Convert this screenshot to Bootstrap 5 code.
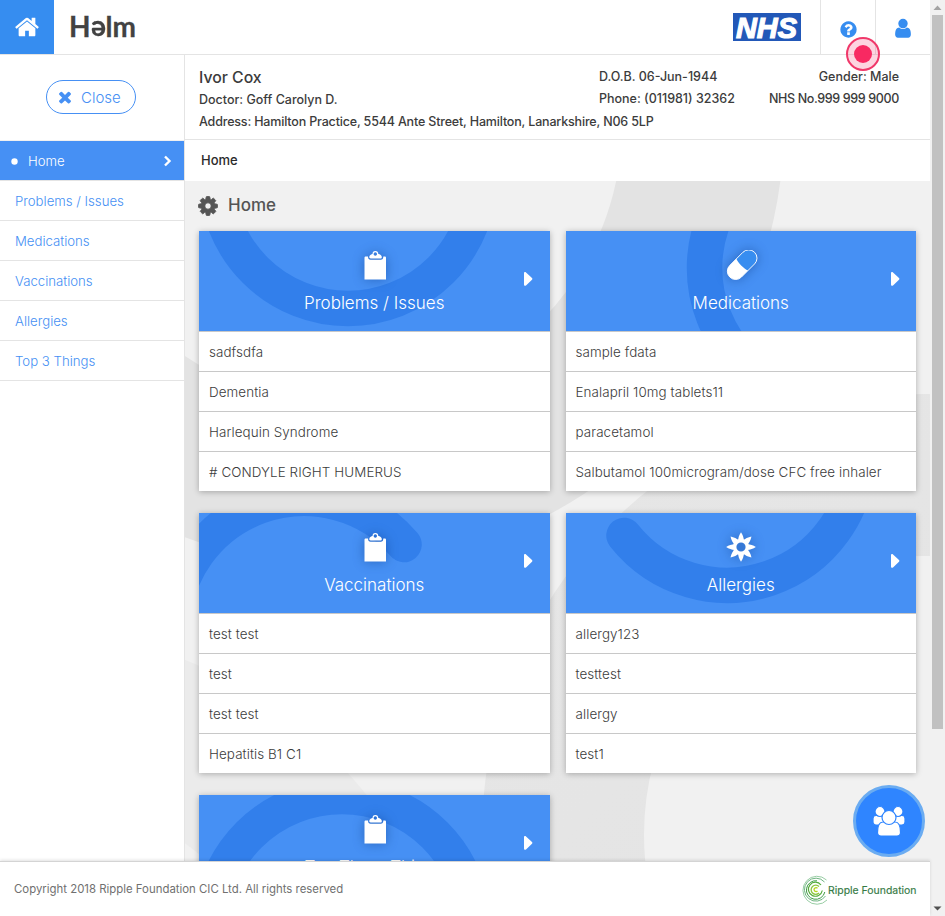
<!DOCTYPE html>
<html lang="en">
<head>
<meta charset="utf-8">
<meta name="viewport" content="width=device-width, initial-scale=1">
<title>Helm</title>
<link href="https://cdn.jsdelivr.net/npm/bootstrap@5.3.0/dist/css/bootstrap.min.css" rel="stylesheet">
<style>
:root{--blue:#4690f4;--blue-dark:#327feb;--line:#e4e4e4}
body{font-family:Inter,"Liberation Sans",sans-serif;font-size:14px;color:#3c3c3c;width:945px;height:916px;overflow:hidden;background:#fff}
svg{display:block}
.topbar{height:55px;border-bottom:1px solid var(--line)}
.home-btn{width:54px;height:54px;background:#368df0}
.brand{font-family:Lato,Inter,sans-serif;font-weight:700;font-size:28px;line-height:54px;color:#424242;padding:0 0 3px 15px;-webkit-text-stroke:.3px #424242}
.brand .turned{display:inline-block;transform:rotate(180deg);transform-origin:50% 55.5%}
.nhs{margin-right:19px}
.top-cell{width:55px;height:54px;border-left:1px solid var(--line)}
.side{width:185px;border-right:1px solid var(--line)}
.close-box{height:86px;padding:25px 0 0 46px;border-bottom:1px solid #f0f0f0}
.btn-close-pill{width:90px;height:34px;border:1px solid var(--blue);border-radius:17px;color:var(--blue);font-size:15px;font-weight:300;padding:0 0 0 11px}
.btn-close-pill span{margin-left:9px;padding-top:2px}
.side-link{height:40px;border-bottom:1px solid var(--line);padding:2px 0 0 15px;color:var(--blue);font-weight:300;font-size:13.2px}
.side-link.current{background:var(--blue);color:#fff;padding:2px 12px 0 11px}
.side-link.current span{margin-left:10px}
.side-link.current .chev{margin-top:-2px}
.patient{height:85px;border-bottom:1px solid var(--line);padding:11px 31px 0 14px;font-size:12.5px;font-weight:500}
.patient-name{font-size:15.8px;line-height:23px}
.pl{line-height:22px}
.t-addr{letter-spacing:-.17px}
.t-nhs{letter-spacing:-.36px}
.crumb{height:41px;padding-left:16px;font-size:13px;font-weight:500;color:#2a2a2a}
.main-area{background:#f1f1f1;height:680px;overflow:hidden;position:relative}
.rings{position:absolute;left:0;top:0}
.page-title{height:50px;padding:0 0 0 12px;font-size:17px;font-weight:500;color:#555}
.page-title span{margin-left:9px}
.tiles{display:grid;grid-template-columns:1fr 1fr;gap:22px 16px;padding:0 14px}
.tile{background:#fff;box-shadow:0 1px 6px rgba(0,0,0,.28)}
.tile-head{height:100px;background:var(--blue);color:#fff;position:relative;overflow:hidden}
.tile-head .arc{position:absolute;left:0;top:0}
.tile-head .glyph{height:50px;padding-top:19px;position:relative;filter:drop-shadow(0 0 6px rgba(0,40,110,.4))}
.glyph.clip{padding-left:3px}
.glyph.pill{padding-left:2px}
.tile-name{position:relative;font-size:17px;font-weight:300;line-height:24px;padding-top:10px}
.tile-go{position:absolute;right:16.5px;top:40px}
.tile-row{height:40px;border-top:1px solid #c8c8c8;padding:2px 0 0 10px;font-size:13.4px;font-weight:350;letter-spacing:.09px}
.foot{height:55px;border-top:1px solid #d4d4d4;box-shadow:0 -1px 3px rgba(0,0,0,.12);padding:1px 13px 0 14px;font-size:11.4px;color:#707070;position:relative;background:#fff}
.scroll{width:15px;background:#f1f1f1}
.scroll-thumb{width:11px;height:714px;background:#c1c1c1}
.fab{position:absolute;left:853px;top:785px;width:72px;height:72px;border-radius:50%;border:3px solid #6bacf1;background:#2f85ff}
.pointer{position:absolute;left:846px;top:37px;width:34px;height:34px;border-radius:50%;border:2px solid #f0386a;background:rgba(247,41,98,.2)}
.pointer span{width:18px;height:18px;border-radius:50%;background:#f82962}
</style>
<script src="https://cdn.jsdelivr.net/npm/bootstrap@5.3.0/dist/js/bootstrap.bundle.min.js"></script>
</head>
<body class="d-flex position-relative">
<svg width="0" height="0" class="position-absolute" aria-hidden="true">
  <symbol id="i-clip" viewBox="0 0 24 30"><path fill="#fff" fill-rule="evenodd" d="M1.800 6.500H4c0 2.200 1 3.200 2.500 3.200h10.300c1.600 0 2.500-1 2.500-3.200h1.400c.8 0 1.300.5 1.300 1.300V29.400H.5V7.800C.5 7 1 6.500 1.800 6.500zM11.300 1a3 3 0 0 1 3 3h.5c1.800.8 3 1.500 3 3v.3c0 .8-.5 1.200-1.200 1.200H6.600c-.7 0-1.300-.5-1.300-1.200V7c0-1.500 1.200-2.200 3-3h.2a3 3 0 0 1 2.800-3zm0 1.300a1.700 1.700 0 1 0 .01 0z"/></symbol>
  <symbol id="i-go" viewBox="0 0 10 16"><path fill="#fff" d="M1 2.200C1 .9 2.300.7 3 1.500l6 5.600c.5.600.5 1 0 1.600l-6 5.700c-.8.800-2 .5-2-.8z"/></symbol>
</svg>
<div class="d-flex flex-column" style="width:930px">
  <header class="topbar d-flex align-items-center">
    <a class="home-btn d-flex align-items-center justify-content-center" href="#"><svg width="26" height="26" viewBox="0 0 1792 1792" fill="#fff"><path d="M1472 992v480q0 26-19 45t-45 19h-384v-384h-256v384h-384q-26 0-45-19t-19-45v-480q0-1 .5-3t.5-3l575-474 575 474q1 2 1 6zm223-69l-62 74q-8 9-21 11h-3q-13 0-21-7l-692-577-692 577q-12 8-24 7-13-2-21-11l-62-74q-8-10-7-23.500t11-21.500l719-599q32-26 76-26t76 26l244 204v-195q0-14 9-23t23-9h192q14 0 23 9t9 23v408l219 182q10 8 11 21.500t-7 23.500z"/></svg></a>
    <div class="brand">H<span class="turned">e</span>lm</div>
    <svg class="nhs ms-auto" width="68" height="28" viewBox="0 0 68 28"><rect width="68" height="28" fill="#2258b8"/><text x="3" y="24.500" textLength="61" lengthAdjust="spacingAndGlyphs" font-family="Liberation Sans, sans-serif" font-size="30" font-weight="700" font-style="italic" fill="#fff" stroke="#fff" stroke-width="1.200">NHS</text></svg>
    <div class="top-cell d-flex align-items-center justify-content-center"><svg class="mt-1" width="19" height="19" viewBox="0 0 1792 1792" fill="#368df0"><path d="M1024 1376v-192q0-14-9-23t-23-9h-192q-14 0-23 9t-9 23v192q0 14 9 23t23 9h192q14 0 23-9t9-23zm256-672q0-88-55.500-163t-138.500-116-170-41q-243 0-371 213-15 24 8 42l132 100q7 6 19 6 16 0 25-12 53-68 86-92 34-24 86-24 48 0 85.500 26t37.500 59q0 38-20 61t-68 45q-63 28-115.500 86.500t-52.500 125.500v36q0 14 9 23t23 9h192q14 0 23-9t9-23q0-19 21.500-49.500t54.500-49.500q32-18 49-28.500t46-35 44.500-48 28-60.500 12.500-81zm384 192q0 209-103 385.500t-279.500 279.500-385.500 103-385.500-103-279.500-279.500-103-385.500 103-385.500 279.500-279.500 385.500-103 385.500 103 279.500 279.500 103 385.500z"/></svg></div>
    <div class="top-cell d-flex align-items-center justify-content-center"><svg class="mt-1" width="22" height="22" viewBox="0 60 1792 1792" fill="#368df0"><path d="M1536 1399q0 109-62.500 187t-150.500 78h-854q-88 0-150.500-78t-62.500-187q0-85 8.500-160.500t31.500-152 58.500-131 94-89 134.500-34.500q131 128 313 128t313-128q76 0 134.500 34.500t94 89 58.500 131 31.500 152 8.500 160.500zm-256-887q0 159-112.500 271.500t-271.500 112.500-271.500-112.500-112.500-271.500 112.500-271.500 271.500-112.500 271.500 112.500 112.500 271.500z"/></svg></div>
  </header>
  <div class="d-flex" style="height:806px">
    <aside class="side flex-shrink-0">
      <div class="close-box"><button class="btn btn-close-pill d-flex align-items-center" type="button"><svg width="14" height="14" viewBox="200 200 1392 1392" fill="#4690f4" class="flex-shrink-0"><path d="M1490 1322q0 40-28 68l-136 136q-28 28-68 28t-68-28l-294-294-294 294q-28 28-68 28t-68-28l-136-136q-28-28-28-68t28-68l294-294-294-294q-28-28-28-68t28-68l136-136q28-28 68-28t68 28l294 294 294-294q28-28 68-28t68 28l136 136q28 28 28 68t-28 68l-294 294 294 294q28 28 28 68z"/></svg><span>Close</span></button></div>
      <nav>
        <a class="side-link current d-flex align-items-center text-decoration-none" href="#"><svg width="7" height="7"><circle cx="3.500" cy="3.500" r="3.200" fill="#fff"/></svg><span>Home</span><svg class="chev ms-auto" width="9" height="12" viewBox="0 0 9 12"><path d="M2 1.500 6.500 6 2 10.500" fill="none" stroke="#fff" stroke-width="2.400"/></svg></a>
        <a class="side-link d-flex align-items-center text-decoration-none" href="#">Problems / Issues</a>
        <a class="side-link d-flex align-items-center text-decoration-none" href="#">Medications</a>
        <a class="side-link d-flex align-items-center text-decoration-none" href="#">Vaccinations</a>
        <a class="side-link d-flex align-items-center text-decoration-none" href="#">Allergies</a>
        <a class="side-link d-flex align-items-center text-decoration-none" href="#">Top 3 Things</a>
      </nav>
    </aside>
    <section class="flex-grow-1">
      <div class="patient">
        <div class="d-flex">
          <div style="width:400px"><div class="patient-name">Ivor Cox</div><div class="pl">Doctor: Goff Carolyn D.</div></div>
          <div><div class="pl">D.O.B. 06-Jun-1944</div><div class="pl">Phone: (011981) 32362</div></div>
          <div class="ms-auto text-end"><div class="pl">Gender: Male</div><div class="pl t-nhs">NHS No.999 999 9000</div></div>
        </div>
        <div class="pl t-addr">Address: Hamilton Practice, 5544 Ante Street, Hamilton, Lanarkshire, N06 5LP</div>
      </div>
      <div class="crumb d-flex align-items-center">Home</div>
      <div class="main-area">
        <svg class="rings" width="745" height="680" viewBox="185 181 745 680" fill="none" stroke-width="162">
          <defs><linearGradient id="g" x1="0" y1="0" x2="1" y2="1"><stop offset="0" stop-color="#e6e6e6"/><stop offset="1" stop-color="#e2e2e2"/></linearGradient></defs>
          <circle cx="21" cy="1069" r="360" stroke="#ebebeb"/>
          <circle cx="342" cy="124" r="361" stroke="#e3e3e3"/>
          <circle cx="923" cy="835" r="360" stroke="url(#g)"/>
        </svg>
        <div class="position-relative">
          <div class="page-title d-flex align-items-center"><svg width="22" height="22" viewBox="0 0 1792 1792" fill="#555" stroke="#555" stroke-width="70"><path d="M1152 896q0-106-75-181t-181-75-181 75-75 181 75 181 181 75 181-75 75-181zm512-109v222q0 12-8 23t-20 13l-185 28q-19 54-39 91 35 50 107 138 10 12 10 25t-9 23q-27 37-99 108t-94 71q-12 0-26-9l-138-108q-44 23-91 38-16 136-29 186-7 28-36 28h-222q-14 0-24.500-8.500t-11.500-21.500l-28-184q-49-16-90-37l-141 107q-10 9-25 9-14 0-25-11-126-114-165-168-7-10-7-23 0-12 8-23 15-21 51-66.500t54-70.500q-27-50-41-99l-183-27q-13-2-21-12.500t-8-23.500v-222q0-12 8-23t19-13l186-28q14-46 39-92-40-57-107-138-10-12-10-24 0-10 9-23 26-36 98.500-107.500t94.500-71.500q13 0 26 10l138 107q44-23 91-38 16-136 29-186 7-28 36-28h222q14 0 24.500 8.500t11.500 21.500l28 184q49 16 90 37l142-107q9-9 24-9 13 0 25 10 129 119 165 170 7 8 7 22 0 12-8 23-15 21-51 66.500t-54 70.500q26 50 41 98l183 28q13 2 21 12.500t8 23.500z"/></svg><span>Home</span></div>
          <div class="tiles">
            <article class="tile">
              <div class="tile-head text-center">
                <svg class="arc" width="351" height="100"><circle cx="149" cy="-54" r="131.500" fill="none" stroke="#327feb" stroke-width="35.500"/></svg>
                <div class="glyph clip d-flex justify-content-center"><svg width="24" height="30"><use href="#i-clip"/></svg></div>
                <div class="tile-name">Problems / Issues</div>
                <svg class="tile-go" width="10" height="16"><use href="#i-go"/></svg>
              </div>
              <div class="tile-row d-flex align-items-center">sadfsdfa</div>
              <div class="tile-row d-flex align-items-center">Dementia</div>
              <div class="tile-row d-flex align-items-center">Harlequin Syndrome</div>
              <div class="tile-row d-flex align-items-center"># CONDYLE RIGHT HUMERUS</div>
            </article>
            <article class="tile">
              <div class="tile-head text-center">
                <svg class="arc" width="351" height="100"><circle cx="270" cy="37" r="131.500" fill="none" stroke="#327feb" stroke-width="35.500"/></svg>
                <div class="glyph pill d-flex justify-content-center"><svg width="32" height="30" viewBox="0 0 32 30"><g transform="rotate(-45 16 14.500)"><rect x="-1.500" y="6.500" width="35" height="16.500" rx="8.200" fill="#378df0" stroke="#fff" stroke-width=".9"/><path d="M16 6.500H6.700a8.250 8.250 0 0 0 0 16.500H16c-1.800-4-1.800-12.500 0-16.500z" fill="#fff"/></g></svg></div>
                <div class="tile-name">Medications</div>
                <svg class="tile-go" width="10" height="16"><use href="#i-go"/></svg>
              </div>
              <div class="tile-row d-flex align-items-center">sample fdata</div>
              <div class="tile-row d-flex align-items-center">Enalapril 10mg tablets11</div>
              <div class="tile-row d-flex align-items-center">paracetamol</div>
              <div class="tile-row d-flex align-items-center">Salbutamol 100microgram/dose CFC free inhaler</div>
            </article>
            <article class="tile">
              <div class="tile-head text-center">
                <svg class="arc" width="351" height="100"><path d="M205 31.500A131.500 131.500 0 0 0-26.500 114.500" fill="none" stroke="#327feb" stroke-width="35.500" stroke-linecap="round"/></svg>
                <div class="glyph clip d-flex justify-content-center"><svg width="24" height="30"><use href="#i-clip"/></svg></div>
                <div class="tile-name">Vaccinations</div>
                <svg class="tile-go" width="10" height="16"><use href="#i-go"/></svg>
              </div>
              <div class="tile-row d-flex align-items-center">test test</div>
              <div class="tile-row d-flex align-items-center">test</div>
              <div class="tile-row d-flex align-items-center">test test</div>
              <div class="tile-row d-flex align-items-center">Hepatitis B1 C1</div>
            </article>
            <article class="tile">
              <div class="tile-head text-center">
                <svg class="arc" width="351" height="100"><path d="M58 22.500A131.500 131.500 0 0 0 292.500-58" fill="none" stroke="#327feb" stroke-width="35.500" stroke-linecap="round"/></svg>
                <div class="glyph d-flex justify-content-center"><svg width="30" height="30" viewBox="-15 -15 30 30"><g fill="#fff"><g id="petals"><path id="petal" d="M0-14.800C2-12 3-8.500 2.800-6H-2.800C-3-8.500-2-12 0-14.800z"/><use href="#petal" transform="rotate(90)"/><use href="#petal" transform="rotate(180)"/><use href="#petal" transform="rotate(270)"/></g><use href="#petals" transform="rotate(45)"/></g><circle r="6.300" fill="none" stroke="#fff" stroke-width="3.400"/></svg></div>
                <div class="tile-name">Allergies</div>
                <svg class="tile-go" width="10" height="16"><use href="#i-go"/></svg>
              </div>
              <div class="tile-row d-flex align-items-center">allergy123</div>
              <div class="tile-row d-flex align-items-center">testtest</div>
              <div class="tile-row d-flex align-items-center">allergy</div>
              <div class="tile-row d-flex align-items-center">test1</div>
            </article>
            <article class="tile">
              <div class="tile-head text-center">
                <svg class="arc" width="351" height="100"><circle cx="143" cy="133" r="131.500" fill="none" stroke="#327feb" stroke-width="35.500"/></svg>
                <div class="glyph clip d-flex justify-content-center"><svg width="24" height="30"><use href="#i-clip"/></svg></div>
                <div class="tile-name">Top Three Things</div>
                <svg class="tile-go" width="10" height="16"><use href="#i-go"/></svg>
              </div>
            </article>
          </div>
        </div>
      </div>
    </section>
  </div>
  <footer class="foot d-flex align-items-center justify-content-between">
    <span>Copyright 2018 Ripple Foundation CIC Ltd. All rights reserved</span>
    <svg width="116" height="30" viewBox="0 0 116 30"><g fill="none" stroke-width="1"><path d="M25.500 5A14 14 0 1 0 26 25" stroke="#8cc79a" stroke-width=".9"/><path d="M23.500 7A11.500 11.500 0 1 0 24.500 21" stroke="#5fab73" stroke-width=".9"/><path d="M16 5.800A9.300 9.300 0 1 0 23.800 17" stroke="#3d9a45"/><path d="M20 10A7 7 0 1 0 21.300 15.500" stroke="#55ad3c" stroke-width="1.200"/><path d="M18 11.500A4.600 4.600 0 1 0 18 18" stroke="#8cc63f" stroke-width="1.300"/><path d="M16.500 13.200A2 2 0 1 0 16.500 16" stroke="#b5d71c" stroke-width="1.300"/></g><text x="27" y="18.500" font-family="Inter, sans-serif" font-size="10.500" font-weight="400" fill="#357a45" stroke="#357a45" stroke-width=".15" textLength="88.500" lengthAdjust="spacingAndGlyphs">Ripple Foundation</text></svg>
  </footer>
</div>
<div class="scroll d-flex flex-column align-items-center flex-shrink-0">
  <svg width="15" height="15"><path d="M3.500 10 7.500 5.500 11.500 10z" fill="#a3a3a3"/></svg>
  <div class="scroll-thumb"></div>
  <svg class="mt-auto" width="15" height="15"><path d="M3.500 5.500h8L7.500 9.500z" fill="#505050"/></svg>
</div>
<a class="fab d-flex align-items-center justify-content-center" href="#"><svg width="32" height="32" viewBox="0 0 32 32" fill="#fff" stroke="#2f85ff" stroke-width="1.200"><rect x="0" y="10.500" width="12" height="9.500" rx="3"/><rect x="20" y="10.500" width="12" height="9.500" rx="3"/><circle cx="7" cy="6.500" r="5"/><circle cx="25" cy="6.500" r="5"/><path d="M4.500 27.500c0-5.500 1-10.500 5.500-10.500h12c4.500 0 5.500 5 5.500 10.500 0 2-1.500 3.500-3.500 3.500H8c-2 0-3.500-1.500-3.500-3.500z"/><circle cx="16" cy="12.500" r="7"/></svg></a>
<div class="pointer d-flex align-items-center justify-content-center"><span></span></div>
</body>
</html>
